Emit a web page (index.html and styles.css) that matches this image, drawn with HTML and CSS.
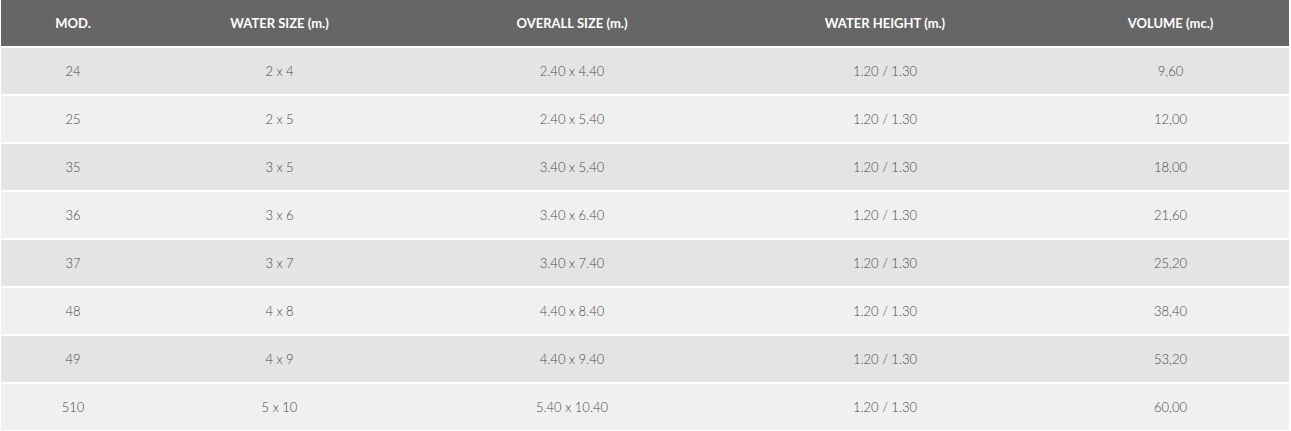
FILE: index.html
```html
<!DOCTYPE html>
<html>
<head>
<meta charset="utf-8">
<link rel="stylesheet" href="styles.css">
</head>
<body>
<div class="wrap">
<table class="specs">
  <colgroup>
    <col class="c1"><col class="c2"><col class="c3"><col class="c4"><col class="c5">
  </colgroup>
  <thead>
    <tr><th>MOD.</th><th>WATER SIZE (m.)</th><th>OVERALL SIZE (m.)</th><th>WATER HEIGHT (m.)</th><th class="last">VOLUME (mc.)</th></tr>
  </thead>
  <tbody>
    <tr><td>24</td><td>2 x 4</td><td>2.40 x 4.40</td><td>1.20 / 1.30</td><td class="last">9,60</td></tr>
    <tr><td>25</td><td>2 x 5</td><td>2.40 x 5.40</td><td>1.20 / 1.30</td><td class="last">12,00</td></tr>
    <tr><td>35</td><td>3 x 5</td><td>3.40 x 5.40</td><td>1.20 / 1.30</td><td class="last">18,00</td></tr>
    <tr><td>36</td><td>3 x 6</td><td>3.40 x 6.40</td><td>1.20 / 1.30</td><td class="last">21,60</td></tr>
    <tr><td>37</td><td>3 x 7</td><td>3.40 x 7.40</td><td>1.20 / 1.30</td><td class="last">25,20</td></tr>
    <tr><td>48</td><td>4 x 8</td><td>4.40 x 8.40</td><td>1.20 / 1.30</td><td class="last">38,40</td></tr>
    <tr><td>49</td><td>4 x 9</td><td>4.40 x 9.40</td><td>1.20 / 1.30</td><td class="last">53,20</td></tr>
    <tr><td>510</td><td>5 x 10</td><td>5.40 x 10.40</td><td>1.20 / 1.30</td><td class="last">60,00</td></tr>
  </tbody>
</table>
</div>
</body>
</html>
```
FILE: styles.css
```css
html, body {
  margin: 0;
  padding: 0;
  background: #ffffff;
}
.wrap {
  padding: 0 2px 0 1px;
}
.specs {
  width: 100%;
  border-collapse: collapse;
  table-layout: fixed;
  font-family: Lato, "Open Sans", sans-serif;
}
.c1 { width: 144px; }
.c2 { width: 269px; }
.c3 { width: 316px; }
.c4 { width: 310px; }
.c5 { width: auto; }
.specs th {
  background: #666666;
  color: #ffffff;
  font-weight: 700;
  font-size: 13px;
  height: 46px;
  padding: 0;
  text-align: center;
  vertical-align: middle;
}
.specs td {
  border-top: 2px solid #ffffff;
  height: 46px;
  padding: 0;
  text-align: center;
  vertical-align: middle;
  color: #4a4a4a;
  font-weight: 300;
  font-size: 13px;
}
.specs .last {
  padding-left: 12px;
}
.specs tbody tr:nth-child(odd) td {
  background: #e4e4e4;
}
.specs tbody tr:nth-child(even) td {
  background: #f0f0f0;
}
```
